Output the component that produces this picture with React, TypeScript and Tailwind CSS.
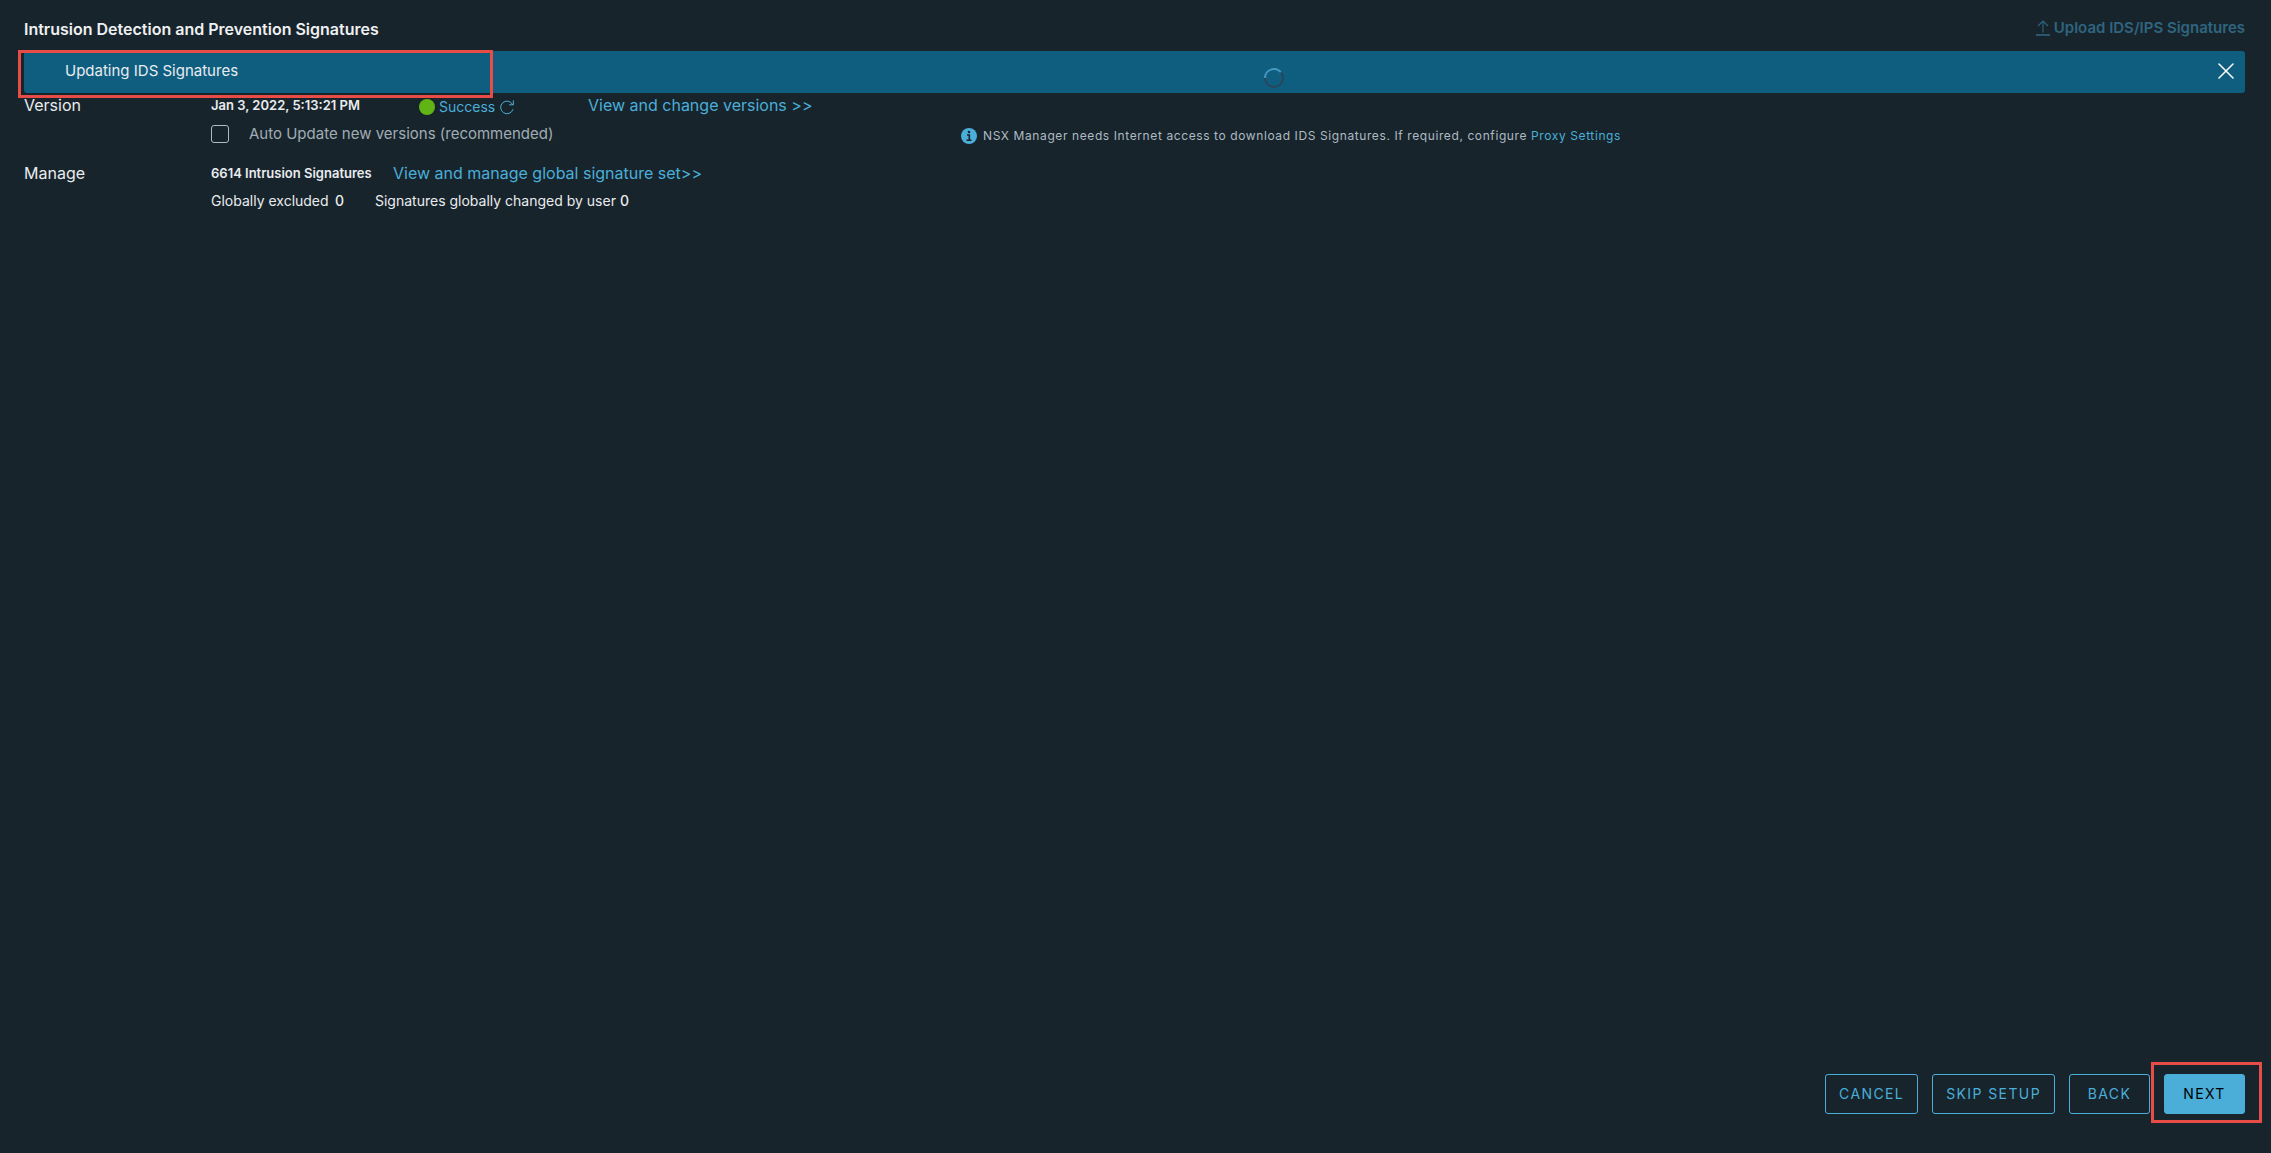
import type { ReactNode } from 'react';

function FieldRow({ label, children }: { label: string; children: ReactNode }) {
  return (
    <div className="grid grid-cols-[187px_1fr]">
      <dt className="text-base leading-6 text-[#e9ecef]">{label}</dt>
      <dd>{children}</dd>
    </div>
  );
}

function FooterButton({ children, primary = false }: { children: ReactNode; primary?: boolean }) {
  return (
    <button
      type="button"
      className={
        primary
          ? 'h-10 min-w-[81px] rounded-[3px] border border-[#4aaed9] bg-[#4aaed9] px-[13px] text-sm tracking-widest text-black'
          : 'h-10 min-w-[81px] rounded-[3px] border border-[#4aaed9] px-[13px] text-sm tracking-widest text-[#4aaed9]'
      }
    >
      {children}
    </button>
  );
}

function RefreshIcon() {
  return (
    <svg viewBox="0 0 16 16" className="size-4" fill="none" stroke="#4aaed9" strokeWidth="1" aria-hidden="true">
      <path d="M14 10.2A6.3 6.3 0 1 1 13.6 5.6" />
      <path d="M14.4 1.4v4.4h-4.2" />
    </svg>
  );
}

export default function App() {
  return (
    <div className="flex min-h-screen flex-col bg-[#18242b] px-6 pt-4 font-['Inter',sans-serif] text-[#e9ecef]">
      <header className="flex h-[35px] items-start justify-between">
        <h1 className="text-base leading-[26px] font-semibold text-[#eef0f2]">Intrusion Detection and Prevention Signatures</h1>
        <button type="button" disabled className="mr-0.5 flex items-center gap-1 text-[15px] leading-6 font-semibold text-[#2f6580]">
          <svg viewBox="0 0 14 16" className="h-4 w-3.5" fill="none" stroke="currentColor" aria-hidden="true">
            <path d="M7 12.5V1.2M2 6l5-5 5 5" strokeWidth="1.1" />
            <path d="M0 15h14" strokeWidth="1.6" />
          </svg>
          Upload IDS/IPS Signatures
        </button>
      </header>

      <div role="status" className="relative mr-0.5 flex h-[42px] items-center justify-between rounded-[3px] bg-[#0f5e80] pr-[11px] pb-0.5 pl-[41px]">
        <p className="text-[15px] leading-5 text-[#e9ecef]">Updating IDS Signatures</p>
        <svg viewBox="0 0 20 20" className="absolute top-[17px] left-[56%] -ml-1 size-5" fill="none" strokeWidth="2" aria-hidden="true">
          <circle cx="10" cy="10" r="9" stroke="#29475a" />
          <path d="M1 10A9 9 0 0 1 16.8 4.1" stroke="#3f98c2" />
        </svg>
        <button type="button" aria-label="Close" className="text-white">
          <svg viewBox="0 0 16 16" className="size-4" stroke="currentColor" strokeWidth="1.5" strokeLinecap="round" aria-hidden="true">
            <path d="M1 1l14 14M15 1L1 15" />
          </svg>
        </button>
        <div className="pointer-events-none absolute -top-px -left-1.5 h-12 w-[475px] border-3 border-[#e84c46]" />
      </div>

      <dl>
        <FieldRow label="Version">
          <div className="flex h-6 items-center">
            <span className="w-[208px] pt-0.5 text-[13px] font-semibold">Jan 3, 2022, 5:13:21 PM</span>
            <div className="flex w-[169px] items-center gap-1 pt-[3px]">
              <span className="size-4 rounded-full bg-[#60b515]" />
              <a href="#status" className="text-sm text-[#4aaed9]">Success</a>
              <button type="button" aria-label="Refresh"><RefreshIcon /></button>
            </div>
            <a href="#versions" className="text-base text-[#4aaed9]">View and change versions &gt;&gt;</a>
          </div>
          <div className="flex h-[34px] items-center">
            <label className="flex w-[750px] items-center gap-5 text-[15px] text-[#a0adb5]">
              <input type="checkbox" className="size-[18px] appearance-none rounded-[3px] border border-[#adbbc4]" />
              Auto Update new versions (recommended)
            </label>
            <p className="flex items-center gap-1.5 pt-[3px] text-xs tracking-wider text-[#adbbc4]">
              <svg viewBox="0 0 16 16" className="size-4" aria-hidden="true">
                <circle cx="8" cy="8" r="8" fill="#4aaed9" />
                <circle cx="8" cy="4" r="1.3" fill="#18242b" />
                <path d="M6 7h2.3v5M5.5 12.3h5" stroke="#18242b" strokeWidth="1.6" fill="none" />
              </svg>
              <span>
                NSX Manager needs Internet access to download IDS Signatures. If required, configure{' '}
                <a href="#proxy" className="text-[#4aaed9]">Proxy Settings</a>
              </span>
            </p>
          </div>
        </FieldRow>
        <div className="h-2.5" />
        <FieldRow label="Manage">
          <div className="flex h-6 items-center">
            <span className="w-[182px] pt-0.5 text-[13px] font-semibold">6614 Intrusion Signatures</span>
            <a href="#signatures" className="text-base text-[#4aaed9]">View and manage global signature set&gt;&gt;</a>
          </div>
          <div className="flex h-8 items-center text-sm">
            <span className="w-[124px]">Globally excluded</span>
            <span className="w-10 font-medium">0</span>
            <span className="w-[245px]">Signatures globally changed by user</span>
            <span className="font-medium">0</span>
          </div>
        </FieldRow>
      </dl>

      <footer className="mt-auto mr-0.5 mb-[39px] flex justify-end gap-3.5">
        <FooterButton>CANCEL</FooterButton>
        <FooterButton>SKIP SETUP</FooterButton>
        <FooterButton>BACK</FooterButton>
        <div className="relative">
          <FooterButton primary>NEXT</FooterButton>
          <div className="pointer-events-none absolute -top-3 -right-[17px] -bottom-[9px] -left-[13px] border-3 border-[#e84c46]" />
        </div>
      </footer>
    </div>
  );
}
